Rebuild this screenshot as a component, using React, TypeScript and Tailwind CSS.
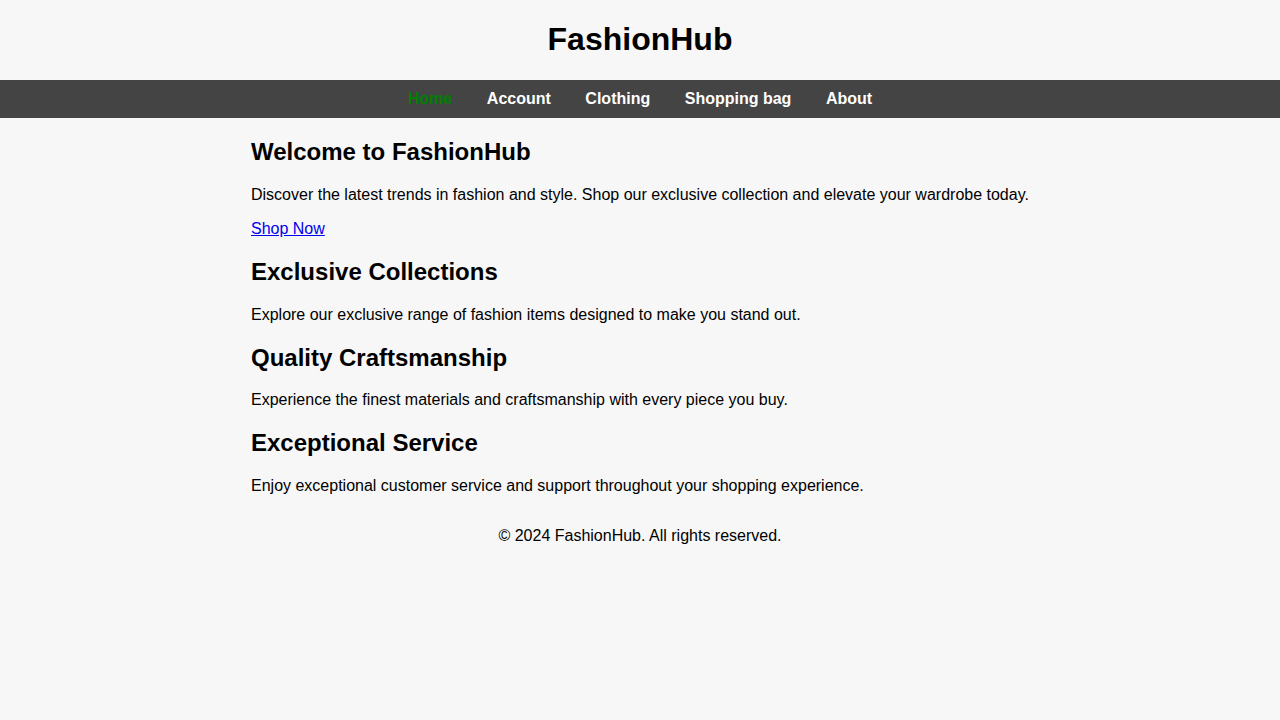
const navLinks = ["Home", "Account", "Clothing", "Shopping bag", "About"];

const sections = [
  {
    title: "Exclusive Collections",
    text: "Explore our exclusive range of fashion items designed to make you stand out.",
  },
  {
    title: "Quality Craftsmanship",
    text: "Experience the finest materials and craftsmanship with every piece you buy.",
  },
  {
    title: "Exceptional Service",
    text: "Enjoy exceptional customer service and support throughout your shopping experience.",
  },
];

export default function App() {
  return (
    <div className="min-h-screen bg-[#f7f7f7] text-black font-['Liberation_Sans',Arial,sans-serif] text-[16px] leading-[1.15]">
      <header className="h-[80px] pt-[21px] text-center">
        <h1 className="text-[32px] font-bold leading-[37px]">FashionHub</h1>
      </header>

      <nav className="h-[38px] bg-[#444444] flex items-center justify-center gap-[34.5px]">
        {navLinks.map((link, i) => (
          <a
            key={link}
            href="#"
            className={`font-bold ${i === 0 ? "text-[#008000]" : "text-white"}`}
          >
            {link}
          </a>
        ))}
      </nav>

      <main className="max-w-[800px] mx-auto pl-[11px] pr-[9px] pt-[20px]">
        <section>
          <h2 className="text-[24px] font-bold leading-[1.15] mb-[19.92px]">Welcome to FashionHub</h2>
          <p className="mb-[16px]">
            Discover the latest trends in fashion and style. Shop our exclusive collection and elevate your wardrobe today.
          </p>
          <p>
            <a href="#" className="text-[#0000ee] underline">
              Shop Now
            </a>
          </p>
        </section>

        {sections.map((s) => (
          <section key={s.title}>
            <h2 className="text-[24px] font-bold leading-[1.15] mt-[19.6px] mb-[20.2px]">{s.title}</h2>
            <p>{s.text}</p>
          </section>
        ))}
      </main>

      <footer className="text-center pt-[31.5px]">
        <p>© 2024 FashionHub. All rights reserved.</p>
      </footer>
    </div>
  );
}
